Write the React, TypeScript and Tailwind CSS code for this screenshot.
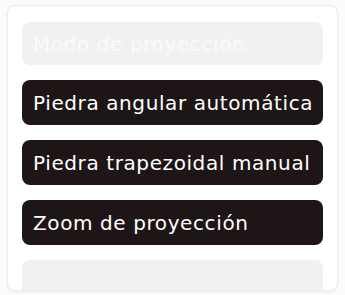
const options = ["Piedra angular automática", "Piedra trapezoidal manual", "Zoom de proyección"];

export default function App() {
  return (
    <div className="h-[295px] w-[345px] overflow-hidden bg-[#fbfbfb] pl-[7px] pr-[7px] pt-[5px]" style={{ fontFamily: "'DejaVu Sans', sans-serif" }}>
      <div className="flex h-[286px] flex-col gap-[15px] overflow-hidden rounded-[8px] border border-[#ececec] bg-white px-[14px] pt-[16px] shadow-[0_1px_3px_rgba(0,0,0,0.06)]">
        <div className="flex h-[43px] shrink-0 items-center whitespace-nowrap rounded-[8px] bg-[#f1f1f1] pl-[11px] text-[20px] tracking-[0.6px] text-[#fafafa]">
          Modo de proyección
        </div>
        {options.map((label) => (
          <button
            key={label}
            type="button"
            className="flex h-[45px] shrink-0 items-center whitespace-nowrap rounded-[8px] bg-[#1e1616] pl-[11px] text-left text-[20px] tracking-[0.6px] text-white"
          >
            {label}
          </button>
        ))}
        <div className="h-[43px] shrink-0 rounded-[8px] bg-[#f1f1f1]" />
      </div>
    </div>
  );
}
